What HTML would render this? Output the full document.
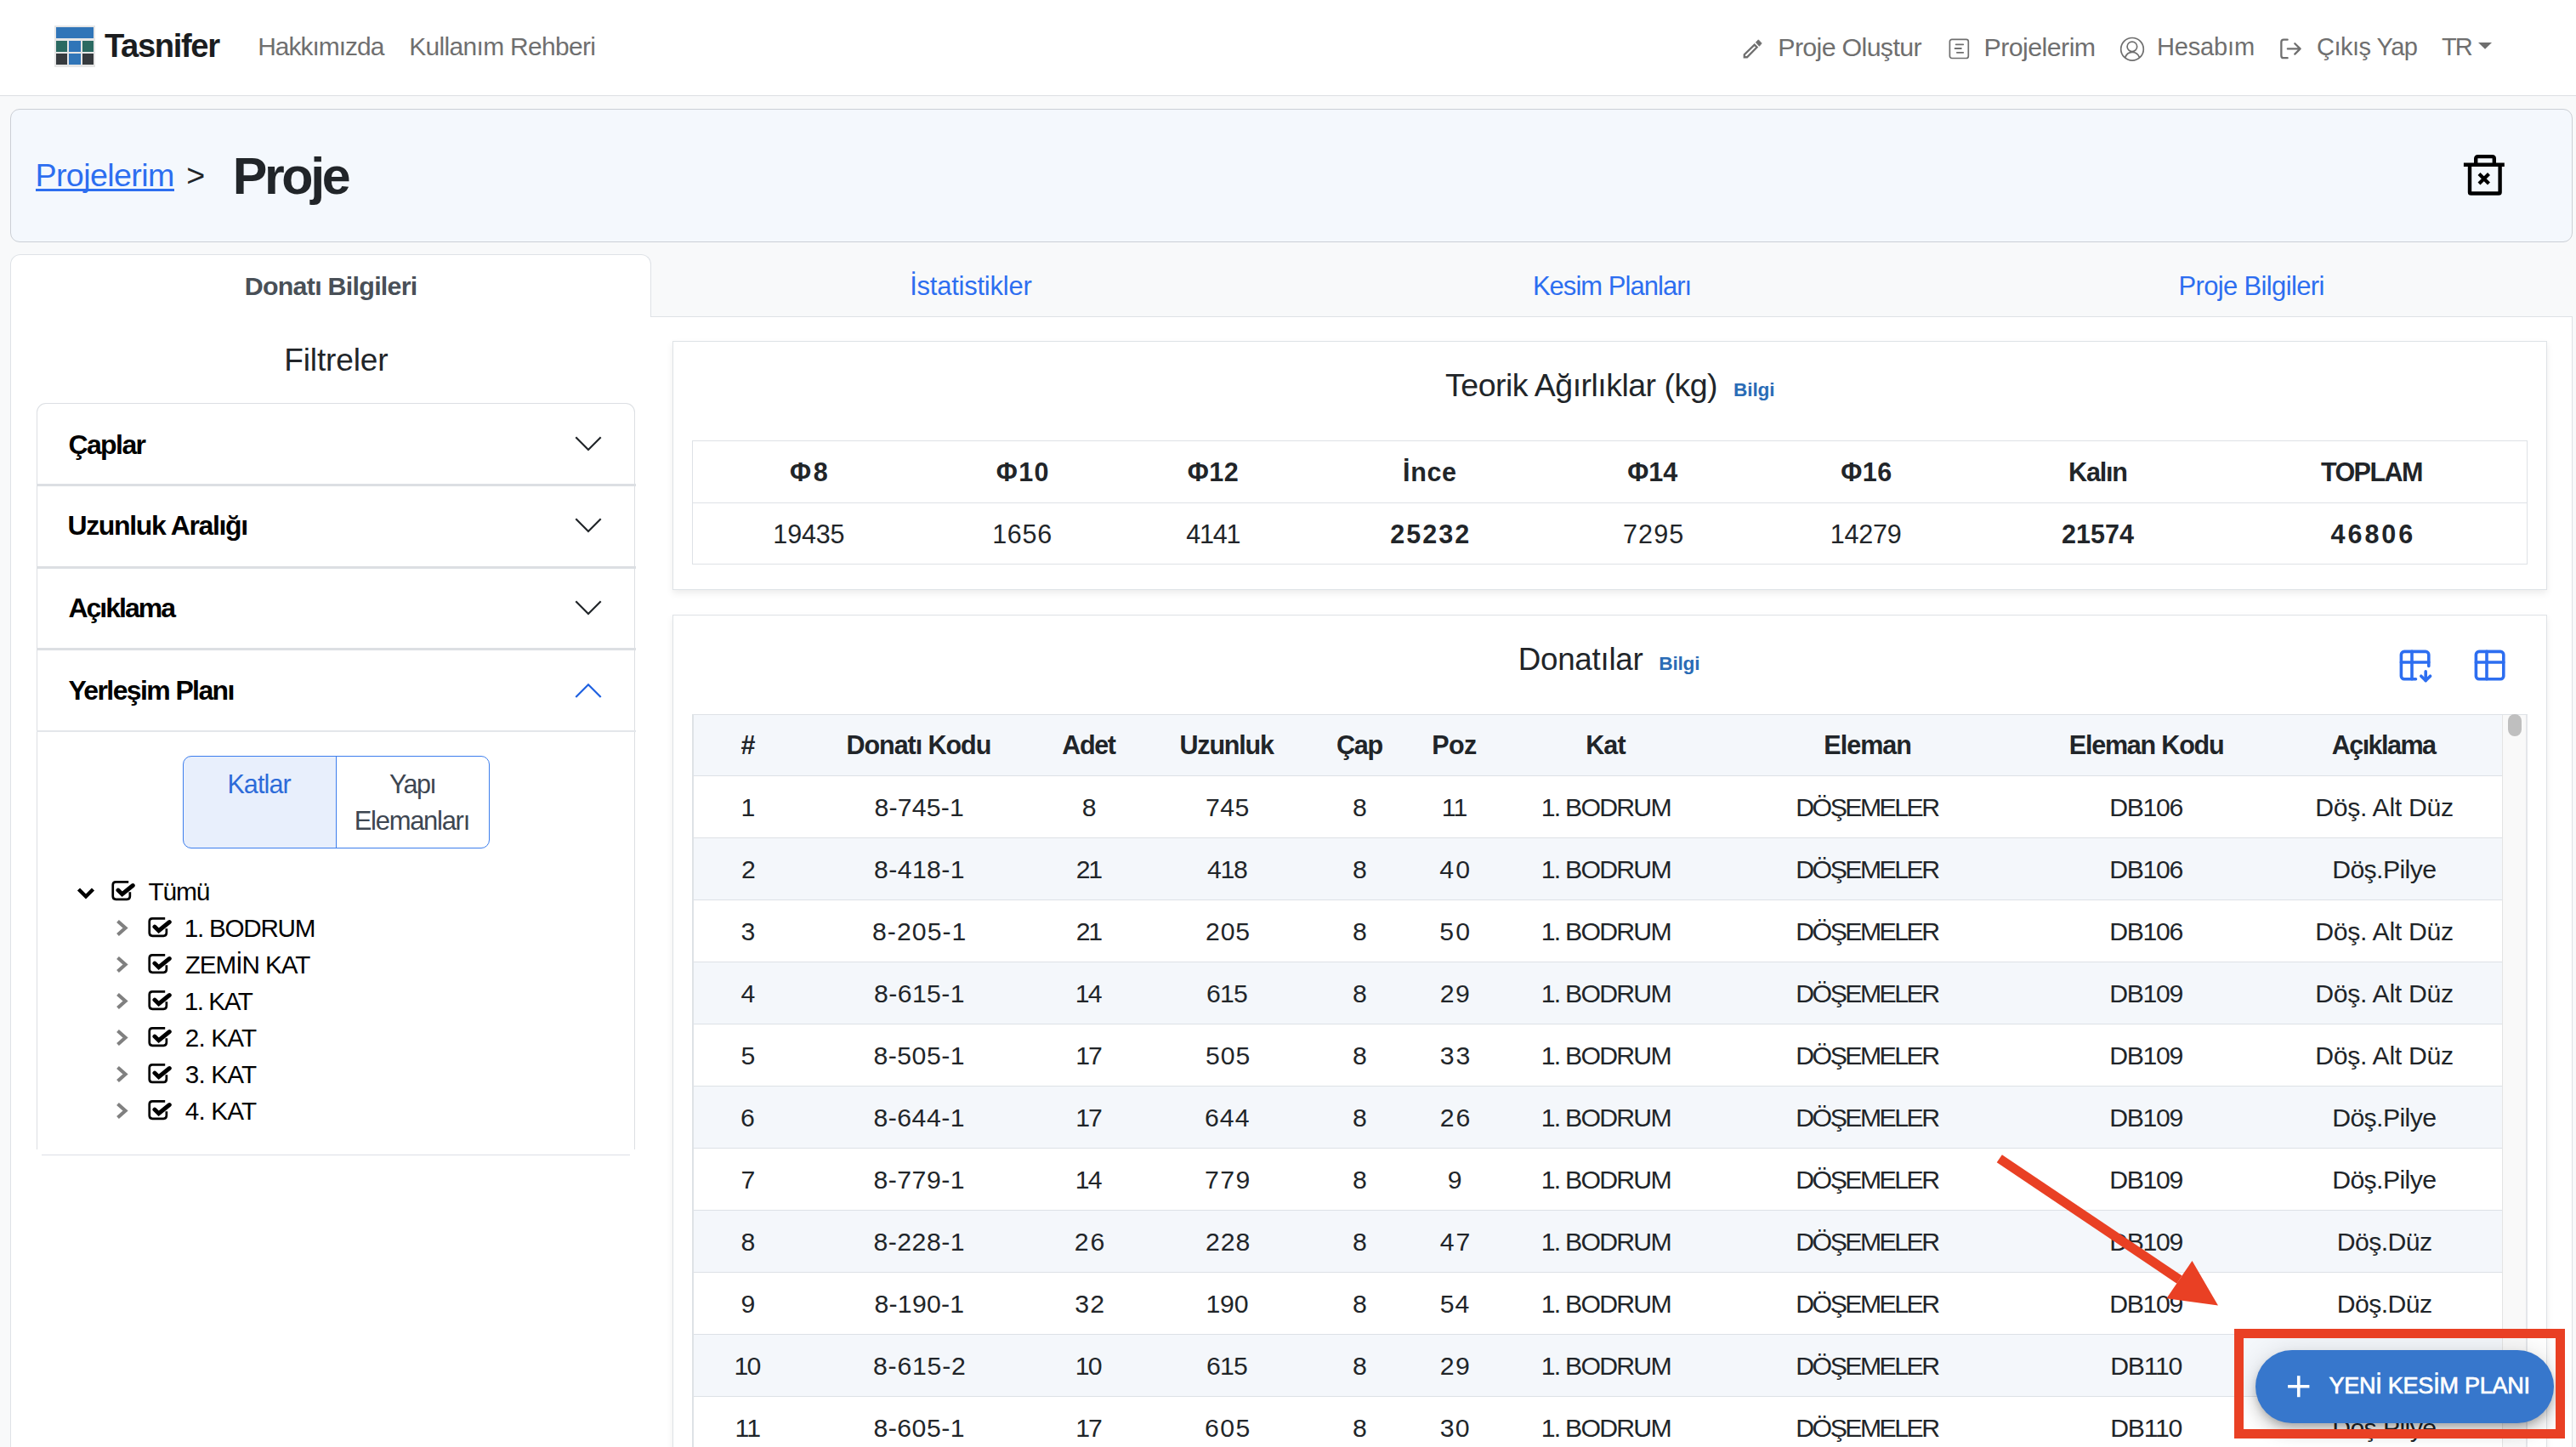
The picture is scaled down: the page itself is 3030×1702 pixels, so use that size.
<!DOCTYPE html><html><head><meta charset="utf-8"><style>
html,body{margin:0;padding:0;width:3030px;height:1702px;overflow:hidden;background:#f8f9fa;font-family:"Liberation Sans",sans-serif;}
.t{position:absolute;white-space:nowrap;}
.b{position:absolute;box-sizing:border-box;}
</style></head><body>
<div class="b" style="left:0.00px;top:0.00px;width:3030.00px;height:112.50px;background:#fff;"></div>
<div class="b" style="left:0.00px;top:112.00px;width:3030.00px;height:1.00px;background:#dcdfe3;"></div>
<div class="b" style="left:64.00px;top:30.00px;width:48.00px;height:49.00px;background:#e6e6e6;"></div>
<div class="b" style="left:65.80px;top:32.10px;width:44.30px;height:13.40px;background:#3075b8;"></div>
<div class="b" style="left:65.80px;top:48.00px;width:13.20px;height:12.80px;background:#2b6a62;"></div>
<div class="b" style="left:81.20px;top:48.00px;width:13.60px;height:12.80px;background:#3075b8;"></div>
<div class="b" style="left:96.90px;top:48.00px;width:13.20px;height:12.80px;background:#2b6a62;"></div>
<div class="b" style="left:65.80px;top:63.40px;width:13.20px;height:13.10px;background:#363a3e;"></div>
<div class="b" style="left:81.20px;top:63.40px;width:13.60px;height:13.10px;background:#3075b8;"></div>
<div class="b" style="left:96.90px;top:63.40px;width:13.20px;height:13.10px;background:#363a3e;"></div>
<div class="t" style="left:123.00px;top:29.55px;font-size:38.23px;line-height:48px;font-weight:bold;color:#1b1d1f;letter-spacing:-1.405px;">Tasnifer</div>
<div class="t" style="left:303.20px;top:35.93px;font-size:29.94px;line-height:37px;font-weight:normal;color:#6f6f6f;letter-spacing:-0.983px;">Hakkımızda</div>
<div class="t" style="left:481.30px;top:35.93px;font-size:29.94px;line-height:37px;font-weight:normal;color:#6f6f6f;letter-spacing:-0.670px;">Kullanım Rehberi</div>
<svg class="b" style="left:2049.00px;top:45.50px;" width="24.00" height="24.00" viewBox="0 0 24 24"><path d="M2.75 21.25 L2.75 18.3 L14.7 6.6 L17.6 9.5 L6.0 21.25 Z" fill="none" stroke="#6f6f6f" stroke-width="2.3" stroke-linejoin="miter"/><path d="M16.3 3.8 L19.3 0.8 L23.2 4.9 L20.4 8.3 Z" fill="#6f6f6f" stroke="#6f6f6f" stroke-width="0.8" stroke-linejoin="round"/></svg>
<div class="t" style="left:2091.30px;top:35.87px;font-size:30.38px;line-height:38px;font-weight:normal;color:#6f6f6f;letter-spacing:-0.671px;">Proje Oluştur</div>
<svg class="b" style="left:2292.00px;top:45.00px;" width="25.00" height="25.00" viewBox="0 0 25 25"><rect x="1.4" y="1.3" width="21.9" height="22.2" rx="2.5" fill="none" stroke="#6f6f6f" stroke-width="1.7"/><path d="M8.65 7.3H17.25M7.55 12H14.85M9.85 16.8H17.25" stroke="#6f6f6f" stroke-width="1.8" stroke-linecap="round"/></svg>
<div class="t" style="left:2333.50px;top:35.87px;font-size:30.38px;line-height:38px;font-weight:normal;color:#6f6f6f;letter-spacing:-0.567px;">Projelerim</div>
<svg class="b" style="left:2492.50px;top:42.50px;" width="30.00" height="30.00" viewBox="0 0 30 30"><g fill="none" stroke="#6f6f6f" stroke-width="1.7"><circle cx="15" cy="14.8" r="13.3"/><circle cx="14.9" cy="11.85" r="5.8"/><path d="M6.6 24.9 C8 20.6 11.3 18.3 15 18.3 C18.7 18.3 22 20.6 23.4 24.4"/></g></svg>
<div class="t" style="left:2536.90px;top:36.73px;font-size:29.07px;line-height:36px;font-weight:normal;color:#6f6f6f;letter-spacing:-0.180px;">Hesabım</div>
<svg class="b" style="left:2681.00px;top:45.00px;" width="27.00" height="25.00" viewBox="0 0 27 25"><g fill="none" stroke="#6f6f6f" stroke-width="2.3" stroke-linecap="round" stroke-linejoin="round"><path d="M9.65 1.65 H5.1 Q2.35 1.65 2.35 4.4 V20.4 Q2.35 23.15 5.1 23.15 H9.65"/><path d="M9.85 12.4 H24.6 M18.3 6.2 L24.6 12.4 L18.3 18.6"/></g></svg>
<div class="t" style="left:2725.00px;top:36.73px;font-size:29.07px;line-height:36px;font-weight:normal;color:#6f6f6f;letter-spacing:-0.550px;">Çıkış Yap</div>
<div class="t" style="left:2871.90px;top:36.73px;font-size:29.07px;line-height:36px;font-weight:normal;color:#6f6f6f;letter-spacing:-2.008px;">TR</div>
<svg class="b" style="left:2914.80px;top:50.00px;" width="16.10" height="7.70" viewBox="0 0 16.1 7.7"><path d="M0 0 H16.1 L8.05 7.7 Z" fill="#6f6f6f"/></svg>
<div class="b" style="left:12.00px;top:128.00px;width:3013.50px;height:156.50px;background:#f4f8fd;border:1.5px solid #cbcfd5;border-radius:11px;"></div>
<div class="t" style="left:41.40px;top:183.46px;font-size:37.65px;line-height:47px;font-weight:normal;color:#2d6ef0;letter-spacing:-0.600px;">Projelerim</div>
<div class="b" style="left:42.00px;top:222.00px;width:162.70px;height:2.70px;background:#2d6ef0;"></div>
<div class="t" style="left:219.30px;top:183.47px;font-size:37.60px;line-height:47px;font-weight:normal;color:#212529;letter-spacing:0.000px;">&gt;</div>
<div class="t" style="left:273.70px;top:169.10px;font-size:60.90px;line-height:76px;font-weight:bold;color:#212529;letter-spacing:-3.313px;">Proje</div>
<svg class="b" style="left:2896.00px;top:180.00px;" width="52.00" height="52.00" viewBox="0 0 52 52"><g fill="none" stroke="#000" stroke-width="4.4"><path d="M1.9 13.7 H49.8"/><path d="M16.2 13.7 V6.5 Q16.2 4.1 18.6 4.1 H35.4 Q37.8 4.1 37.8 6.5 V13.7"/><path d="M9 13.7 L9 46.2 Q9 47.5 10.5 47.5 H43 Q44.6 47.5 44.6 46.2 L44.6 13.7"/><path d="M20 24.5 L31.5 36 M31.5 24.5 L20 36" stroke-width="4.2"/></g></svg>
<div class="b" style="left:765.00px;top:371.50px;width:2260.50px;height:1.50px;background:#dee2e6;"></div>
<div class="b" style="left:12.00px;top:298.80px;width:754.00px;height:81.20px;background:#fff;border:1.5px solid #dee2e6;border-bottom:none;border-radius:12px 12px 0 0;"></div>
<div class="t" style="left:287.70px;top:317.37px;font-size:30.38px;line-height:38px;font-weight:bold;color:#495057;letter-spacing:-0.714px;">Donatı Bilgileri</div>
<div class="t" style="left:1070.20px;top:316.57px;font-size:30.96px;line-height:39px;font-weight:normal;color:#2d6ef0;letter-spacing:-0.224px;">İstatistikler</div>
<div class="t" style="left:1802.90px;top:316.57px;font-size:30.96px;line-height:39px;font-weight:normal;color:#2d6ef0;letter-spacing:-0.949px;">Kesim Planları</div>
<div class="t" style="left:2562.50px;top:316.57px;font-size:30.96px;line-height:39px;font-weight:normal;color:#2d6ef0;letter-spacing:-0.632px;">Proje Bilgileri</div>
<div class="b" style="left:12.00px;top:372.50px;width:3013.50px;height:1427.50px;background:#fff;border:1.5px solid #dee2e6;border-top:none;"></div>
<div class="t" style="left:334.20px;top:399.96px;font-size:37.06px;line-height:46px;font-weight:normal;color:#212529;letter-spacing:-0.126px;">Filtreler</div>
<div class="b" style="left:42.50px;top:474.00px;width:704.80px;height:878.00px;border:1.5px solid #dcdfe3;border-bottom:none;border-radius:11px 11px 0 0;"></div>
<div class="b" style="left:48.70px;top:1357.70px;width:692.30px;height:1.50px;background:#dcdfe6;"></div>
<div class="b" style="left:43.00px;top:569.20px;width:704.50px;height:3.00px;background:#dcdfe3;"></div>
<div class="b" style="left:43.00px;top:666.00px;width:704.50px;height:3.00px;background:#dcdfe3;"></div>
<div class="b" style="left:43.00px;top:762.10px;width:704.50px;height:3.00px;background:#dcdfe3;"></div>
<div class="b" style="left:43.00px;top:859.00px;width:704.50px;height:1.50px;background:#e3e6ea;"></div>
<div class="t" style="left:80.40px;top:502.62px;font-size:31.98px;line-height:40px;font-weight:bold;color:#000;letter-spacing:-1.570px;">Çaplar</div>
<svg class="b" style="left:675.00px;top:512.00px;" width="34.00" height="19.00" viewBox="0 0 34 19"><path d="M2.3 2.3 L17 17 L31.7 2.3" fill="none" stroke="#212529" stroke-width="2.2"/></svg>
<div class="t" style="left:79.40px;top:598.12px;font-size:31.98px;line-height:40px;font-weight:bold;color:#000;letter-spacing:-1.337px;">Uzunluk Aralığı</div>
<svg class="b" style="left:675.00px;top:607.50px;" width="34.00" height="19.00" viewBox="0 0 34 19"><path d="M2.3 2.3 L17 17 L31.7 2.3" fill="none" stroke="#212529" stroke-width="2.2"/></svg>
<div class="t" style="left:80.40px;top:695.22px;font-size:31.98px;line-height:40px;font-weight:bold;color:#000;letter-spacing:-1.957px;">Açıklama</div>
<svg class="b" style="left:675.00px;top:704.60px;" width="34.00" height="19.00" viewBox="0 0 34 19"><path d="M2.3 2.3 L17 17 L31.7 2.3" fill="none" stroke="#212529" stroke-width="2.2"/></svg>
<div class="t" style="left:80.40px;top:791.92px;font-size:31.98px;line-height:40px;font-weight:bold;color:#000;letter-spacing:-1.600px;">Yerleşim Planı</div>
<svg class="b" style="left:675.00px;top:802.50px;" width="34.00" height="19.00" viewBox="0 0 34 19"><path d="M2.3 17 L17 2.3 L31.7 17" fill="none" stroke="#1e60e0" stroke-width="2.2"/></svg>
<div class="b" style="left:215.00px;top:889.30px;width:180.80px;height:108.30px;background:#e8effc;border-radius:10px 0 0 10px;"></div>
<div class="b" style="left:215.00px;top:889.30px;width:361.00px;height:108.30px;border:1.5px solid #3d7eed;border-radius:10px;"></div>
<div class="b" style="left:394.60px;top:889.30px;width:1.50px;height:108.30px;background:#3d7eed;"></div>
<div class="t" style="left:267.40px;top:902.52px;font-size:30.52px;line-height:38px;font-weight:normal;color:#2d6bd9;letter-spacing:-0.893px;">Katlar</div>
<div class="t" style="left:458.00px;top:902.52px;font-size:30.52px;line-height:38px;font-weight:normal;color:#3d4651;letter-spacing:-1.563px;">Yapı</div>
<div class="t" style="left:416.70px;top:946.17px;font-size:30.96px;line-height:39px;font-weight:normal;color:#3d4651;letter-spacing:-1.265px;">Elemanları</div>
<svg class="b" style="left:90.00px;top:1043.00px;" width="22.00" height="16.00" viewBox="0 0 22 16"><path d="M2.5 3 L11 11.5 L19.5 3" fill="none" stroke="#000" stroke-width="4.4"/></svg>
<svg class="b" style="left:131.00px;top:1035.50px;" width="28.00" height="24.00" viewBox="0 0 28 24"><path d="M20.2 1.35 H5.25 Q1.75 1.35 1.75 4.85 V18.35 Q1.75 21.85 5.25 21.85 H18.35 Q21.85 21.85 21.85 18.35 V13.3" fill="none" stroke="#000" stroke-width="2.7"/><path d="M7.9 11.1 L12.7 15.7 L25.3 5.5" fill="none" stroke="#000" stroke-width="4.9" stroke-linecap="round" stroke-linejoin="miter"/></svg>
<div class="t" style="left:174.50px;top:1030.13px;font-size:29.94px;line-height:37px;font-weight:normal;color:#000;letter-spacing:-1.167px;">Tümü</div>
<svg class="b" style="left:135.00px;top:1080.90px;" width="17.00" height="21.00" viewBox="0 0 17 21"><path d="M3.5 2.5 L12.5 10.5 L3.5 18.5" fill="none" stroke="#808080" stroke-width="4.2"/></svg>
<svg class="b" style="left:174.00px;top:1078.90px;" width="28.00" height="24.00" viewBox="0 0 28 24"><path d="M20.2 1.35 H5.25 Q1.75 1.35 1.75 4.85 V18.35 Q1.75 21.85 5.25 21.85 H18.35 Q21.85 21.85 21.85 18.35 V13.3" fill="none" stroke="#000" stroke-width="2.7"/><path d="M7.9 11.1 L12.7 15.7 L25.3 5.5" fill="none" stroke="#000" stroke-width="4.9" stroke-linecap="round" stroke-linejoin="miter"/></svg>
<div class="t" style="left:216.80px;top:1073.13px;font-size:29.65px;line-height:37px;font-weight:normal;color:#000;letter-spacing:-1.252px;">1. BODRUM</div>
<svg class="b" style="left:135.00px;top:1123.94px;" width="17.00" height="21.00" viewBox="0 0 17 21"><path d="M3.5 2.5 L12.5 10.5 L3.5 18.5" fill="none" stroke="#808080" stroke-width="4.2"/></svg>
<svg class="b" style="left:174.00px;top:1121.94px;" width="28.00" height="24.00" viewBox="0 0 28 24"><path d="M20.2 1.35 H5.25 Q1.75 1.35 1.75 4.85 V18.35 Q1.75 21.85 5.25 21.85 H18.35 Q21.85 21.85 21.85 18.35 V13.3" fill="none" stroke="#000" stroke-width="2.7"/><path d="M7.9 11.1 L12.7 15.7 L25.3 5.5" fill="none" stroke="#000" stroke-width="4.9" stroke-linecap="round" stroke-linejoin="miter"/></svg>
<div class="t" style="left:217.80px;top:1116.17px;font-size:29.65px;line-height:37px;font-weight:normal;color:#000;letter-spacing:-1.046px;">ZEMİN KAT</div>
<svg class="b" style="left:135.00px;top:1166.98px;" width="17.00" height="21.00" viewBox="0 0 17 21"><path d="M3.5 2.5 L12.5 10.5 L3.5 18.5" fill="none" stroke="#808080" stroke-width="4.2"/></svg>
<svg class="b" style="left:174.00px;top:1164.98px;" width="28.00" height="24.00" viewBox="0 0 28 24"><path d="M20.2 1.35 H5.25 Q1.75 1.35 1.75 4.85 V18.35 Q1.75 21.85 5.25 21.85 H18.35 Q21.85 21.85 21.85 18.35 V13.3" fill="none" stroke="#000" stroke-width="2.7"/><path d="M7.9 11.1 L12.7 15.7 L25.3 5.5" fill="none" stroke="#000" stroke-width="4.9" stroke-linecap="round" stroke-linejoin="miter"/></svg>
<div class="t" style="left:216.80px;top:1159.21px;font-size:29.65px;line-height:37px;font-weight:normal;color:#000;letter-spacing:-1.462px;">1. KAT</div>
<svg class="b" style="left:135.00px;top:1210.02px;" width="17.00" height="21.00" viewBox="0 0 17 21"><path d="M3.5 2.5 L12.5 10.5 L3.5 18.5" fill="none" stroke="#808080" stroke-width="4.2"/></svg>
<svg class="b" style="left:174.00px;top:1208.02px;" width="28.00" height="24.00" viewBox="0 0 28 24"><path d="M20.2 1.35 H5.25 Q1.75 1.35 1.75 4.85 V18.35 Q1.75 21.85 5.25 21.85 H18.35 Q21.85 21.85 21.85 18.35 V13.3" fill="none" stroke="#000" stroke-width="2.7"/><path d="M7.9 11.1 L12.7 15.7 L25.3 5.5" fill="none" stroke="#000" stroke-width="4.9" stroke-linecap="round" stroke-linejoin="miter"/></svg>
<div class="t" style="left:217.80px;top:1202.25px;font-size:29.65px;line-height:37px;font-weight:normal;color:#000;letter-spacing:-0.822px;">2. KAT</div>
<svg class="b" style="left:135.00px;top:1253.06px;" width="17.00" height="21.00" viewBox="0 0 17 21"><path d="M3.5 2.5 L12.5 10.5 L3.5 18.5" fill="none" stroke="#808080" stroke-width="4.2"/></svg>
<svg class="b" style="left:174.00px;top:1251.06px;" width="28.00" height="24.00" viewBox="0 0 28 24"><path d="M20.2 1.35 H5.25 Q1.75 1.35 1.75 4.85 V18.35 Q1.75 21.85 5.25 21.85 H18.35 Q21.85 21.85 21.85 18.35 V13.3" fill="none" stroke="#000" stroke-width="2.7"/><path d="M7.9 11.1 L12.7 15.7 L25.3 5.5" fill="none" stroke="#000" stroke-width="4.9" stroke-linecap="round" stroke-linejoin="miter"/></svg>
<div class="t" style="left:217.80px;top:1245.29px;font-size:29.65px;line-height:37px;font-weight:normal;color:#000;letter-spacing:-0.822px;">3. KAT</div>
<svg class="b" style="left:135.00px;top:1296.10px;" width="17.00" height="21.00" viewBox="0 0 17 21"><path d="M3.5 2.5 L12.5 10.5 L3.5 18.5" fill="none" stroke="#808080" stroke-width="4.2"/></svg>
<svg class="b" style="left:174.00px;top:1294.10px;" width="28.00" height="24.00" viewBox="0 0 28 24"><path d="M20.2 1.35 H5.25 Q1.75 1.35 1.75 4.85 V18.35 Q1.75 21.85 5.25 21.85 H18.35 Q21.85 21.85 21.85 18.35 V13.3" fill="none" stroke="#000" stroke-width="2.7"/><path d="M7.9 11.1 L12.7 15.7 L25.3 5.5" fill="none" stroke="#000" stroke-width="4.9" stroke-linecap="round" stroke-linejoin="miter"/></svg>
<div class="t" style="left:217.80px;top:1288.33px;font-size:29.65px;line-height:37px;font-weight:normal;color:#000;letter-spacing:-0.822px;">4. KAT</div>
<div class="b" style="left:790.80px;top:400.80px;width:2205.40px;height:293.00px;background:#fff;border:1.5px solid #dee2e6;box-shadow:0 4px 8px rgba(0,0,0,.075);"></div>
<div class="t" style="left:1700.10px;top:429.71px;font-size:37.50px;line-height:47px;font-weight:normal;color:#212529;letter-spacing:-0.520px;">Teorik Ağırlıklar (kg)</div>
<div class="t" style="left:2039.10px;top:444.04px;font-size:22.67px;line-height:28px;font-weight:bold;color:#2a6cb6;letter-spacing:-0.173px;">Bilgi</div>
<div class="b" style="left:814.00px;top:517.80px;width:2159.00px;height:146.40px;border:1.5px solid #dee2e6;"></div>
<div class="b" style="left:814.00px;top:590.70px;width:2159.00px;height:1.50px;background:#dee2e6;"></div>
<div class="t" style="left:929.05px;top:535.62px;font-size:30.52px;line-height:38px;font-weight:bold;color:#212529;letter-spacing:2.631px;">Φ8</div>
<div class="t" style="left:909.35px;top:608.62px;font-size:30.52px;line-height:38px;font-weight:normal;color:#212529;letter-spacing:-0.164px;">19435</div>
<div class="t" style="left:1171.65px;top:535.62px;font-size:30.52px;line-height:38px;font-weight:bold;color:#212529;letter-spacing:1.469px;">Φ10</div>
<div class="t" style="left:1167.15px;top:608.62px;font-size:30.52px;line-height:38px;font-weight:normal;color:#212529;letter-spacing:0.729px;">1656</div>
<div class="t" style="left:1396.75px;top:535.62px;font-size:30.52px;line-height:38px;font-weight:bold;color:#212529;letter-spacing:0.469px;">Φ12</div>
<div class="t" style="left:1395.20px;top:608.62px;font-size:30.52px;line-height:38px;font-weight:normal;color:#212529;letter-spacing:-1.238px;">4141</div>
<div class="t" style="left:1650.10px;top:535.62px;font-size:30.52px;line-height:38px;font-weight:bold;color:#212529;letter-spacing:0.584px;">İnce</div>
<div class="t" style="left:1635.25px;top:608.62px;font-size:30.52px;line-height:38px;font-weight:bold;color:#212529;letter-spacing:2.011px;">25232</div>
<div class="t" style="left:1914.30px;top:535.62px;font-size:30.52px;line-height:38px;font-weight:bold;color:#212529;letter-spacing:-0.031px;">Φ14</div>
<div class="t" style="left:1908.90px;top:608.62px;font-size:30.52px;line-height:38px;font-weight:normal;color:#212529;letter-spacing:1.162px;">7295</div>
<div class="t" style="left:2165.35px;top:535.62px;font-size:30.52px;line-height:38px;font-weight:bold;color:#212529;letter-spacing:0.419px;">Φ16</div>
<div class="t" style="left:2152.85px;top:608.62px;font-size:30.52px;line-height:38px;font-weight:normal;color:#212529;letter-spacing:-0.214px;">14279</div>
<div class="t" style="left:2433.10px;top:535.62px;font-size:30.52px;line-height:38px;font-weight:bold;color:#212529;letter-spacing:-1.207px;">Kalın</div>
<div class="t" style="left:2425.00px;top:608.62px;font-size:30.52px;line-height:38px;font-weight:bold;color:#212529;letter-spacing:0.036px;">21574</div>
<div class="t" style="left:2729.90px;top:535.62px;font-size:30.52px;line-height:38px;font-weight:bold;color:#212529;letter-spacing:-1.550px;">TOPLAM</div>
<div class="t" style="left:2741.50px;top:608.62px;font-size:30.52px;line-height:38px;font-weight:bold;color:#212529;letter-spacing:2.986px;">46806</div>
<div class="b" style="left:790.80px;top:722.80px;width:2205.40px;height:1077.20px;background:#fff;border:1.5px solid #dee2e6;box-shadow:0 4px 8px rgba(0,0,0,.075);"></div>
<div class="t" style="left:1785.70px;top:752.56px;font-size:36.77px;line-height:46px;font-weight:normal;color:#212529;letter-spacing:-0.262px;">Donatılar</div>
<div class="t" style="left:1951.20px;top:765.94px;font-size:22.67px;line-height:28px;font-weight:bold;color:#2a6cb6;letter-spacing:-0.173px;">Bilgi</div>
<svg class="b" style="left:2818.90px;top:760.90px;" width="43.20" height="43.20" viewBox="0 0 24 24"><g fill="none" stroke="#2d6ef0" stroke-width="2" stroke-linecap="round" stroke-linejoin="round"><path d="M12.5 21h-7.5a2 2 0 0 1 -2 -2v-14a2 2 0 0 1 2 -2h14a2 2 0 0 1 2 2v7.5"/><path d="M3 10h18"/><path d="M10 3v18"/><path d="M19 16v6"/><path d="M22 19l-3 3l-3 -3"/></g></svg>
<svg class="b" style="left:2907.10px;top:760.90px;" width="43.20" height="43.20" viewBox="0 0 24 24"><g fill="none" stroke="#2d6ef0" stroke-width="2" stroke-linecap="round" stroke-linejoin="round"><rect x="3" y="3" width="18" height="18" rx="2"/><path d="M3 10h18"/><path d="M10 3v18"/></g></svg>
<div class="b" style="left:814.00px;top:839.50px;width:2158.80px;height:1.50px;background:#dee2e6;"></div>
<div class="b" style="left:814.00px;top:839.50px;width:1.50px;height:960.50px;background:#dee2e6;"></div>
<div class="b" style="left:815.50px;top:841.00px;width:2127.00px;height:71.40px;background:#f4f7fb;"></div>
<div class="b" style="left:815.50px;top:911.80px;width:2127.00px;height:1.20px;background:#dde1e6;"></div>
<div class="b" style="left:815.50px;top:985.45px;width:2127.00px;height:73.05px;background:#f4f7fb;"></div>
<div class="b" style="left:815.50px;top:984.85px;width:2127.00px;height:1.20px;background:#dde1e6;"></div>
<div class="b" style="left:815.50px;top:1057.90px;width:2127.00px;height:1.20px;background:#dde1e6;"></div>
<div class="b" style="left:815.50px;top:1131.55px;width:2127.00px;height:73.05px;background:#f4f7fb;"></div>
<div class="b" style="left:815.50px;top:1130.95px;width:2127.00px;height:1.20px;background:#dde1e6;"></div>
<div class="b" style="left:815.50px;top:1204.00px;width:2127.00px;height:1.20px;background:#dde1e6;"></div>
<div class="b" style="left:815.50px;top:1277.65px;width:2127.00px;height:73.05px;background:#f4f7fb;"></div>
<div class="b" style="left:815.50px;top:1277.05px;width:2127.00px;height:1.20px;background:#dde1e6;"></div>
<div class="b" style="left:815.50px;top:1350.10px;width:2127.00px;height:1.20px;background:#dde1e6;"></div>
<div class="b" style="left:815.50px;top:1423.75px;width:2127.00px;height:73.05px;background:#f4f7fb;"></div>
<div class="b" style="left:815.50px;top:1423.15px;width:2127.00px;height:1.20px;background:#dde1e6;"></div>
<div class="b" style="left:815.50px;top:1496.20px;width:2127.00px;height:1.20px;background:#dde1e6;"></div>
<div class="b" style="left:815.50px;top:1569.85px;width:2127.00px;height:73.05px;background:#f4f7fb;"></div>
<div class="b" style="left:815.50px;top:1569.25px;width:2127.00px;height:1.20px;background:#dde1e6;"></div>
<div class="b" style="left:815.50px;top:1642.30px;width:2127.00px;height:1.20px;background:#dde1e6;"></div>
<div class="b" style="left:815.50px;top:1715.20px;width:2127.00px;height:1.50px;background:#dee2e6;"></div>
<div class="b" style="left:2942.50px;top:841.00px;width:30.30px;height:959.00px;background:#f9f9f9;border-left:1.5px solid #e4e4e4;border-right:2px solid #e4e6ea;"></div>
<div class="b" style="left:2950.00px;top:840.00px;width:16.00px;height:26.00px;background:#bfbfbf;border-radius:8px;"></div>
<div class="t" style="left:871.50px;top:857.42px;font-size:30.52px;line-height:38px;font-weight:bold;color:#212529;letter-spacing:0.000px;">#</div>
<div class="t" style="left:995.50px;top:857.42px;font-size:30.52px;line-height:38px;font-weight:bold;color:#212529;letter-spacing:-1.057px;">Donatı Kodu</div>
<div class="t" style="left:1249.30px;top:857.42px;font-size:30.52px;line-height:38px;font-weight:bold;color:#212529;letter-spacing:-1.360px;">Adet</div>
<div class="t" style="left:1387.50px;top:857.42px;font-size:30.52px;line-height:38px;font-weight:bold;color:#212529;letter-spacing:-1.189px;">Uzunluk</div>
<div class="t" style="left:1572.10px;top:857.42px;font-size:30.52px;line-height:38px;font-weight:bold;color:#212529;letter-spacing:-1.271px;">Çap</div>
<div class="t" style="left:1684.30px;top:857.42px;font-size:30.52px;line-height:38px;font-weight:bold;color:#212529;letter-spacing:-0.681px;">Poz</div>
<div class="t" style="left:1865.20px;top:857.42px;font-size:30.52px;line-height:38px;font-weight:bold;color:#212529;letter-spacing:-0.860px;">Kat</div>
<div class="t" style="left:2145.30px;top:857.42px;font-size:30.52px;line-height:38px;font-weight:bold;color:#212529;letter-spacing:-0.970px;">Eleman</div>
<div class="t" style="left:2433.80px;top:857.42px;font-size:30.52px;line-height:38px;font-weight:bold;color:#212529;letter-spacing:-1.216px;">Eleman Kodu</div>
<div class="t" style="left:2742.70px;top:857.42px;font-size:30.52px;line-height:38px;font-weight:bold;color:#212529;letter-spacing:-1.535px;">Açıklama</div>
<div class="t" style="left:871.50px;top:930.92px;font-size:30.23px;line-height:38px;font-weight:normal;color:#212529;letter-spacing:0.000px;">1</div>
<div class="t" style="left:1028.50px;top:930.92px;font-size:30.23px;line-height:38px;font-weight:normal;color:#212529;letter-spacing:0.208px;">8-745-1</div>
<div class="t" style="left:1272.80px;top:930.92px;font-size:30.23px;line-height:38px;font-weight:normal;color:#212529;letter-spacing:0.000px;">8</div>
<div class="t" style="left:1418.00px;top:930.92px;font-size:30.23px;line-height:38px;font-weight:normal;color:#212529;letter-spacing:0.456px;">745</div>
<div class="t" style="left:1591.10px;top:930.92px;font-size:30.23px;line-height:38px;font-weight:normal;color:#212529;letter-spacing:0.000px;">8</div>
<div class="t" style="left:1695.80px;top:930.92px;font-size:30.23px;line-height:38px;font-weight:normal;color:#212529;letter-spacing:-0.842px;">11</div>
<div class="t" style="left:1812.70px;top:930.92px;font-size:30.23px;line-height:38px;font-weight:normal;color:#212529;letter-spacing:-1.751px;">1. BODRUM</div>
<div class="t" style="left:2112.30px;top:930.92px;font-size:30.23px;line-height:38px;font-weight:normal;color:#212529;letter-spacing:-2.498px;">DÖŞEMELER</div>
<div class="t" style="left:2481.30px;top:930.92px;font-size:30.23px;line-height:38px;font-weight:normal;color:#212529;letter-spacing:-1.359px;">DB106</div>
<div class="t" style="left:2723.20px;top:930.92px;font-size:30.23px;line-height:38px;font-weight:normal;color:#212529;letter-spacing:-0.305px;">Döş. Alt Düz</div>
<div class="t" style="left:872.00px;top:1003.97px;font-size:30.23px;line-height:38px;font-weight:normal;color:#212529;letter-spacing:0.000px;">2</div>
<div class="t" style="left:1028.00px;top:1003.97px;font-size:30.23px;line-height:38px;font-weight:normal;color:#212529;letter-spacing:0.408px;">8-418-1</div>
<div class="t" style="left:1265.80px;top:1003.97px;font-size:30.23px;line-height:38px;font-weight:normal;color:#212529;letter-spacing:-2.358px;">21</div>
<div class="t" style="left:1420.00px;top:1003.97px;font-size:30.23px;line-height:38px;font-weight:normal;color:#212529;letter-spacing:-1.244px;">418</div>
<div class="t" style="left:1591.10px;top:1003.97px;font-size:30.23px;line-height:38px;font-weight:normal;color:#212529;letter-spacing:0.000px;">8</div>
<div class="t" style="left:1693.30px;top:1003.97px;font-size:30.23px;line-height:38px;font-weight:normal;color:#212529;letter-spacing:2.242px;">40</div>
<div class="t" style="left:1812.70px;top:1003.97px;font-size:30.23px;line-height:38px;font-weight:normal;color:#212529;letter-spacing:-1.751px;">1. BODRUM</div>
<div class="t" style="left:2112.30px;top:1003.97px;font-size:30.23px;line-height:38px;font-weight:normal;color:#212529;letter-spacing:-2.498px;">DÖŞEMELER</div>
<div class="t" style="left:2481.30px;top:1003.97px;font-size:30.23px;line-height:38px;font-weight:normal;color:#212529;letter-spacing:-1.359px;">DB106</div>
<div class="t" style="left:2743.20px;top:1003.97px;font-size:30.23px;line-height:38px;font-weight:normal;color:#212529;letter-spacing:-0.606px;">Döş.Pilye</div>
<div class="t" style="left:871.50px;top:1077.02px;font-size:30.23px;line-height:38px;font-weight:normal;color:#212529;letter-spacing:0.000px;">3</div>
<div class="t" style="left:1026.00px;top:1077.02px;font-size:30.23px;line-height:38px;font-weight:normal;color:#212529;letter-spacing:1.041px;">8-205-1</div>
<div class="t" style="left:1265.80px;top:1077.02px;font-size:30.23px;line-height:38px;font-weight:normal;color:#212529;letter-spacing:-2.358px;">21</div>
<div class="t" style="left:1418.00px;top:1077.02px;font-size:30.23px;line-height:38px;font-weight:normal;color:#212529;letter-spacing:0.856px;">205</div>
<div class="t" style="left:1591.10px;top:1077.02px;font-size:30.23px;line-height:38px;font-weight:normal;color:#212529;letter-spacing:0.000px;">8</div>
<div class="t" style="left:1693.30px;top:1077.02px;font-size:30.23px;line-height:38px;font-weight:normal;color:#212529;letter-spacing:2.242px;">50</div>
<div class="t" style="left:1812.70px;top:1077.02px;font-size:30.23px;line-height:38px;font-weight:normal;color:#212529;letter-spacing:-1.751px;">1. BODRUM</div>
<div class="t" style="left:2112.30px;top:1077.02px;font-size:30.23px;line-height:38px;font-weight:normal;color:#212529;letter-spacing:-2.498px;">DÖŞEMELER</div>
<div class="t" style="left:2481.30px;top:1077.02px;font-size:30.23px;line-height:38px;font-weight:normal;color:#212529;letter-spacing:-1.359px;">DB106</div>
<div class="t" style="left:2723.20px;top:1077.02px;font-size:30.23px;line-height:38px;font-weight:normal;color:#212529;letter-spacing:-0.305px;">Döş. Alt Düz</div>
<div class="t" style="left:871.50px;top:1150.07px;font-size:30.23px;line-height:38px;font-weight:normal;color:#212529;letter-spacing:0.000px;">4</div>
<div class="t" style="left:1028.00px;top:1150.07px;font-size:30.23px;line-height:38px;font-weight:normal;color:#212529;letter-spacing:0.408px;">8-615-1</div>
<div class="t" style="left:1264.80px;top:1150.07px;font-size:30.23px;line-height:38px;font-weight:normal;color:#212529;letter-spacing:-1.958px;">14</div>
<div class="t" style="left:1419.00px;top:1150.07px;font-size:30.23px;line-height:38px;font-weight:normal;color:#212529;letter-spacing:-0.744px;">615</div>
<div class="t" style="left:1591.10px;top:1150.07px;font-size:30.23px;line-height:38px;font-weight:normal;color:#212529;letter-spacing:0.000px;">8</div>
<div class="t" style="left:1693.80px;top:1150.07px;font-size:30.23px;line-height:38px;font-weight:normal;color:#212529;letter-spacing:1.442px;">29</div>
<div class="t" style="left:1812.70px;top:1150.07px;font-size:30.23px;line-height:38px;font-weight:normal;color:#212529;letter-spacing:-1.751px;">1. BODRUM</div>
<div class="t" style="left:2112.30px;top:1150.07px;font-size:30.23px;line-height:38px;font-weight:normal;color:#212529;letter-spacing:-2.498px;">DÖŞEMELER</div>
<div class="t" style="left:2481.30px;top:1150.07px;font-size:30.23px;line-height:38px;font-weight:normal;color:#212529;letter-spacing:-1.359px;">DB109</div>
<div class="t" style="left:2723.20px;top:1150.07px;font-size:30.23px;line-height:38px;font-weight:normal;color:#212529;letter-spacing:-0.305px;">Döş. Alt Düz</div>
<div class="t" style="left:871.50px;top:1223.12px;font-size:30.23px;line-height:38px;font-weight:normal;color:#212529;letter-spacing:0.000px;">5</div>
<div class="t" style="left:1027.50px;top:1223.12px;font-size:30.23px;line-height:38px;font-weight:normal;color:#212529;letter-spacing:0.475px;">8-505-1</div>
<div class="t" style="left:1265.30px;top:1223.12px;font-size:30.23px;line-height:38px;font-weight:normal;color:#212529;letter-spacing:-2.158px;">17</div>
<div class="t" style="left:1418.00px;top:1223.12px;font-size:30.23px;line-height:38px;font-weight:normal;color:#212529;letter-spacing:0.956px;">505</div>
<div class="t" style="left:1591.10px;top:1223.12px;font-size:30.23px;line-height:38px;font-weight:normal;color:#212529;letter-spacing:0.000px;">8</div>
<div class="t" style="left:1693.80px;top:1223.12px;font-size:30.23px;line-height:38px;font-weight:normal;color:#212529;letter-spacing:1.842px;">33</div>
<div class="t" style="left:1812.70px;top:1223.12px;font-size:30.23px;line-height:38px;font-weight:normal;color:#212529;letter-spacing:-1.751px;">1. BODRUM</div>
<div class="t" style="left:2112.30px;top:1223.12px;font-size:30.23px;line-height:38px;font-weight:normal;color:#212529;letter-spacing:-2.498px;">DÖŞEMELER</div>
<div class="t" style="left:2481.30px;top:1223.12px;font-size:30.23px;line-height:38px;font-weight:normal;color:#212529;letter-spacing:-1.359px;">DB109</div>
<div class="t" style="left:2723.20px;top:1223.12px;font-size:30.23px;line-height:38px;font-weight:normal;color:#212529;letter-spacing:-0.305px;">Döş. Alt Düz</div>
<div class="t" style="left:871.00px;top:1296.17px;font-size:30.23px;line-height:38px;font-weight:normal;color:#212529;letter-spacing:0.000px;">6</div>
<div class="t" style="left:1027.50px;top:1296.17px;font-size:30.23px;line-height:38px;font-weight:normal;color:#212529;letter-spacing:0.475px;">8-644-1</div>
<div class="t" style="left:1265.30px;top:1296.17px;font-size:30.23px;line-height:38px;font-weight:normal;color:#212529;letter-spacing:-2.158px;">17</div>
<div class="t" style="left:1417.00px;top:1296.17px;font-size:30.23px;line-height:38px;font-weight:normal;color:#212529;letter-spacing:1.056px;">644</div>
<div class="t" style="left:1591.10px;top:1296.17px;font-size:30.23px;line-height:38px;font-weight:normal;color:#212529;letter-spacing:0.000px;">8</div>
<div class="t" style="left:1693.80px;top:1296.17px;font-size:30.23px;line-height:38px;font-weight:normal;color:#212529;letter-spacing:1.842px;">26</div>
<div class="t" style="left:1812.70px;top:1296.17px;font-size:30.23px;line-height:38px;font-weight:normal;color:#212529;letter-spacing:-1.751px;">1. BODRUM</div>
<div class="t" style="left:2112.30px;top:1296.17px;font-size:30.23px;line-height:38px;font-weight:normal;color:#212529;letter-spacing:-2.498px;">DÖŞEMELER</div>
<div class="t" style="left:2481.30px;top:1296.17px;font-size:30.23px;line-height:38px;font-weight:normal;color:#212529;letter-spacing:-1.359px;">DB109</div>
<div class="t" style="left:2743.20px;top:1296.17px;font-size:30.23px;line-height:38px;font-weight:normal;color:#212529;letter-spacing:-0.606px;">Döş.Pilye</div>
<div class="t" style="left:871.50px;top:1369.22px;font-size:30.23px;line-height:38px;font-weight:normal;color:#212529;letter-spacing:0.000px;">7</div>
<div class="t" style="left:1027.50px;top:1369.22px;font-size:30.23px;line-height:38px;font-weight:normal;color:#212529;letter-spacing:0.475px;">8-779-1</div>
<div class="t" style="left:1264.80px;top:1369.22px;font-size:30.23px;line-height:38px;font-weight:normal;color:#212529;letter-spacing:-1.958px;">14</div>
<div class="t" style="left:1417.00px;top:1369.22px;font-size:30.23px;line-height:38px;font-weight:normal;color:#212529;letter-spacing:1.456px;">779</div>
<div class="t" style="left:1591.10px;top:1369.22px;font-size:30.23px;line-height:38px;font-weight:normal;color:#212529;letter-spacing:0.000px;">8</div>
<div class="t" style="left:1702.80px;top:1369.22px;font-size:30.23px;line-height:38px;font-weight:normal;color:#212529;letter-spacing:0.000px;">9</div>
<div class="t" style="left:1812.70px;top:1369.22px;font-size:30.23px;line-height:38px;font-weight:normal;color:#212529;letter-spacing:-1.751px;">1. BODRUM</div>
<div class="t" style="left:2112.30px;top:1369.22px;font-size:30.23px;line-height:38px;font-weight:normal;color:#212529;letter-spacing:-2.498px;">DÖŞEMELER</div>
<div class="t" style="left:2481.30px;top:1369.22px;font-size:30.23px;line-height:38px;font-weight:normal;color:#212529;letter-spacing:-1.359px;">DB109</div>
<div class="t" style="left:2743.20px;top:1369.22px;font-size:30.23px;line-height:38px;font-weight:normal;color:#212529;letter-spacing:-0.606px;">Döş.Pilye</div>
<div class="t" style="left:871.50px;top:1442.27px;font-size:30.23px;line-height:38px;font-weight:normal;color:#212529;letter-spacing:0.000px;">8</div>
<div class="t" style="left:1027.50px;top:1442.27px;font-size:30.23px;line-height:38px;font-weight:normal;color:#212529;letter-spacing:0.475px;">8-228-1</div>
<div class="t" style="left:1263.80px;top:1442.27px;font-size:30.23px;line-height:38px;font-weight:normal;color:#212529;letter-spacing:1.842px;">26</div>
<div class="t" style="left:1418.00px;top:1442.27px;font-size:30.23px;line-height:38px;font-weight:normal;color:#212529;letter-spacing:0.956px;">228</div>
<div class="t" style="left:1591.10px;top:1442.27px;font-size:30.23px;line-height:38px;font-weight:normal;color:#212529;letter-spacing:0.000px;">8</div>
<div class="t" style="left:1693.80px;top:1442.27px;font-size:30.23px;line-height:38px;font-weight:normal;color:#212529;letter-spacing:1.842px;">47</div>
<div class="t" style="left:1812.70px;top:1442.27px;font-size:30.23px;line-height:38px;font-weight:normal;color:#212529;letter-spacing:-1.751px;">1. BODRUM</div>
<div class="t" style="left:2112.30px;top:1442.27px;font-size:30.23px;line-height:38px;font-weight:normal;color:#212529;letter-spacing:-2.498px;">DÖŞEMELER</div>
<div class="t" style="left:2481.30px;top:1442.27px;font-size:30.23px;line-height:38px;font-weight:normal;color:#212529;letter-spacing:-1.359px;">DB109</div>
<div class="t" style="left:2748.70px;top:1442.27px;font-size:30.23px;line-height:38px;font-weight:normal;color:#212529;letter-spacing:-0.556px;">Döş.Düz</div>
<div class="t" style="left:871.50px;top:1515.32px;font-size:30.23px;line-height:38px;font-weight:normal;color:#212529;letter-spacing:0.000px;">9</div>
<div class="t" style="left:1028.50px;top:1515.32px;font-size:30.23px;line-height:38px;font-weight:normal;color:#212529;letter-spacing:0.241px;">8-190-1</div>
<div class="t" style="left:1264.30px;top:1515.32px;font-size:30.23px;line-height:38px;font-weight:normal;color:#212529;letter-spacing:1.042px;">32</div>
<div class="t" style="left:1418.50px;top:1515.32px;font-size:30.23px;line-height:38px;font-weight:normal;color:#212529;letter-spacing:-0.194px;">190</div>
<div class="t" style="left:1591.10px;top:1515.32px;font-size:30.23px;line-height:38px;font-weight:normal;color:#212529;letter-spacing:0.000px;">8</div>
<div class="t" style="left:1693.80px;top:1515.32px;font-size:30.23px;line-height:38px;font-weight:normal;color:#212529;letter-spacing:0.842px;">54</div>
<div class="t" style="left:1812.70px;top:1515.32px;font-size:30.23px;line-height:38px;font-weight:normal;color:#212529;letter-spacing:-1.751px;">1. BODRUM</div>
<div class="t" style="left:2112.30px;top:1515.32px;font-size:30.23px;line-height:38px;font-weight:normal;color:#212529;letter-spacing:-2.498px;">DÖŞEMELER</div>
<div class="t" style="left:2481.30px;top:1515.32px;font-size:30.23px;line-height:38px;font-weight:normal;color:#212529;letter-spacing:-1.359px;">DB109</div>
<div class="t" style="left:2748.70px;top:1515.32px;font-size:30.23px;line-height:38px;font-weight:normal;color:#212529;letter-spacing:-0.556px;">Döş.Düz</div>
<div class="t" style="left:863.50px;top:1588.37px;font-size:30.23px;line-height:38px;font-weight:normal;color:#212529;letter-spacing:-1.758px;">10</div>
<div class="t" style="left:1027.00px;top:1588.37px;font-size:30.23px;line-height:38px;font-weight:normal;color:#212529;letter-spacing:0.775px;">8-615-2</div>
<div class="t" style="left:1264.80px;top:1588.37px;font-size:30.23px;line-height:38px;font-weight:normal;color:#212529;letter-spacing:-1.758px;">10</div>
<div class="t" style="left:1419.00px;top:1588.37px;font-size:30.23px;line-height:38px;font-weight:normal;color:#212529;letter-spacing:-0.744px;">615</div>
<div class="t" style="left:1591.10px;top:1588.37px;font-size:30.23px;line-height:38px;font-weight:normal;color:#212529;letter-spacing:0.000px;">8</div>
<div class="t" style="left:1693.80px;top:1588.37px;font-size:30.23px;line-height:38px;font-weight:normal;color:#212529;letter-spacing:1.442px;">29</div>
<div class="t" style="left:1812.70px;top:1588.37px;font-size:30.23px;line-height:38px;font-weight:normal;color:#212529;letter-spacing:-1.751px;">1. BODRUM</div>
<div class="t" style="left:2112.30px;top:1588.37px;font-size:30.23px;line-height:38px;font-weight:normal;color:#212529;letter-spacing:-2.498px;">DÖŞEMELER</div>
<div class="t" style="left:2482.30px;top:1588.37px;font-size:30.23px;line-height:38px;font-weight:normal;color:#212529;letter-spacing:-1.316px;">DB110</div>
<div class="t" style="left:2743.20px;top:1588.37px;font-size:30.23px;line-height:38px;font-weight:normal;color:#212529;letter-spacing:-0.606px;">Döş.Pilye</div>
<div class="t" style="left:864.50px;top:1661.42px;font-size:30.23px;line-height:38px;font-weight:normal;color:#212529;letter-spacing:-0.842px;">11</div>
<div class="t" style="left:1027.50px;top:1661.42px;font-size:30.23px;line-height:38px;font-weight:normal;color:#212529;letter-spacing:0.475px;">8-605-1</div>
<div class="t" style="left:1265.30px;top:1661.42px;font-size:30.23px;line-height:38px;font-weight:normal;color:#212529;letter-spacing:-2.158px;">17</div>
<div class="t" style="left:1417.00px;top:1661.42px;font-size:30.23px;line-height:38px;font-weight:normal;color:#212529;letter-spacing:1.456px;">605</div>
<div class="t" style="left:1591.10px;top:1661.42px;font-size:30.23px;line-height:38px;font-weight:normal;color:#212529;letter-spacing:0.000px;">8</div>
<div class="t" style="left:1693.80px;top:1661.42px;font-size:30.23px;line-height:38px;font-weight:normal;color:#212529;letter-spacing:1.042px;">30</div>
<div class="t" style="left:1812.70px;top:1661.42px;font-size:30.23px;line-height:38px;font-weight:normal;color:#212529;letter-spacing:-1.751px;">1. BODRUM</div>
<div class="t" style="left:2112.30px;top:1661.42px;font-size:30.23px;line-height:38px;font-weight:normal;color:#212529;letter-spacing:-2.498px;">DÖŞEMELER</div>
<div class="t" style="left:2482.30px;top:1661.42px;font-size:30.23px;line-height:38px;font-weight:normal;color:#212529;letter-spacing:-1.316px;">DB110</div>
<div class="t" style="left:2743.20px;top:1661.42px;font-size:30.23px;line-height:38px;font-weight:normal;color:#212529;letter-spacing:-0.606px;">Döş.Pilye</div>
<div class="b" style="left:2653.10px;top:1588.10px;width:350.80px;height:85.50px;background:#3777cc;border-radius:43px;box-shadow:0 5px 9px -2px rgba(0,0,0,.2),0 11px 18px 0 rgba(0,0,0,.14),0 2px 33px 0 rgba(0,0,0,.12);"></div>
<svg class="b" style="left:2689.00px;top:1616.00px;" width="29.50" height="29.50" viewBox="0 0 29.5 29.5"><path d="M14.75 2.2 V27.3 M2.1 14.75 H27.4" stroke="#fff" stroke-width="3.6"/></svg>
<div class="t" style="left:2739.50px;top:1612.53px;font-size:27.03px;line-height:34px;font-weight:normal;color:#fff;letter-spacing:-0.249px;-webkit-text-stroke:0.7px #fff;">YENİ KESİM PLANI</div>
<div class="b" style="left:2627.50px;top:1562.50px;width:389.90px;height:129.70px;border:11px solid #e94024;"></div>
<svg class="b" style="left:2300.00px;top:1300.00px;" width="400.00" height="300.00" viewBox="0 0 400 300"><path d="M51.8 62.7 L263.5 205.1" stroke="#e94024" stroke-width="11"/><path d="M309 235.6 L278.5 183 L248.4 227.2 Z" fill="#e94024"/></svg>
</body></html>
